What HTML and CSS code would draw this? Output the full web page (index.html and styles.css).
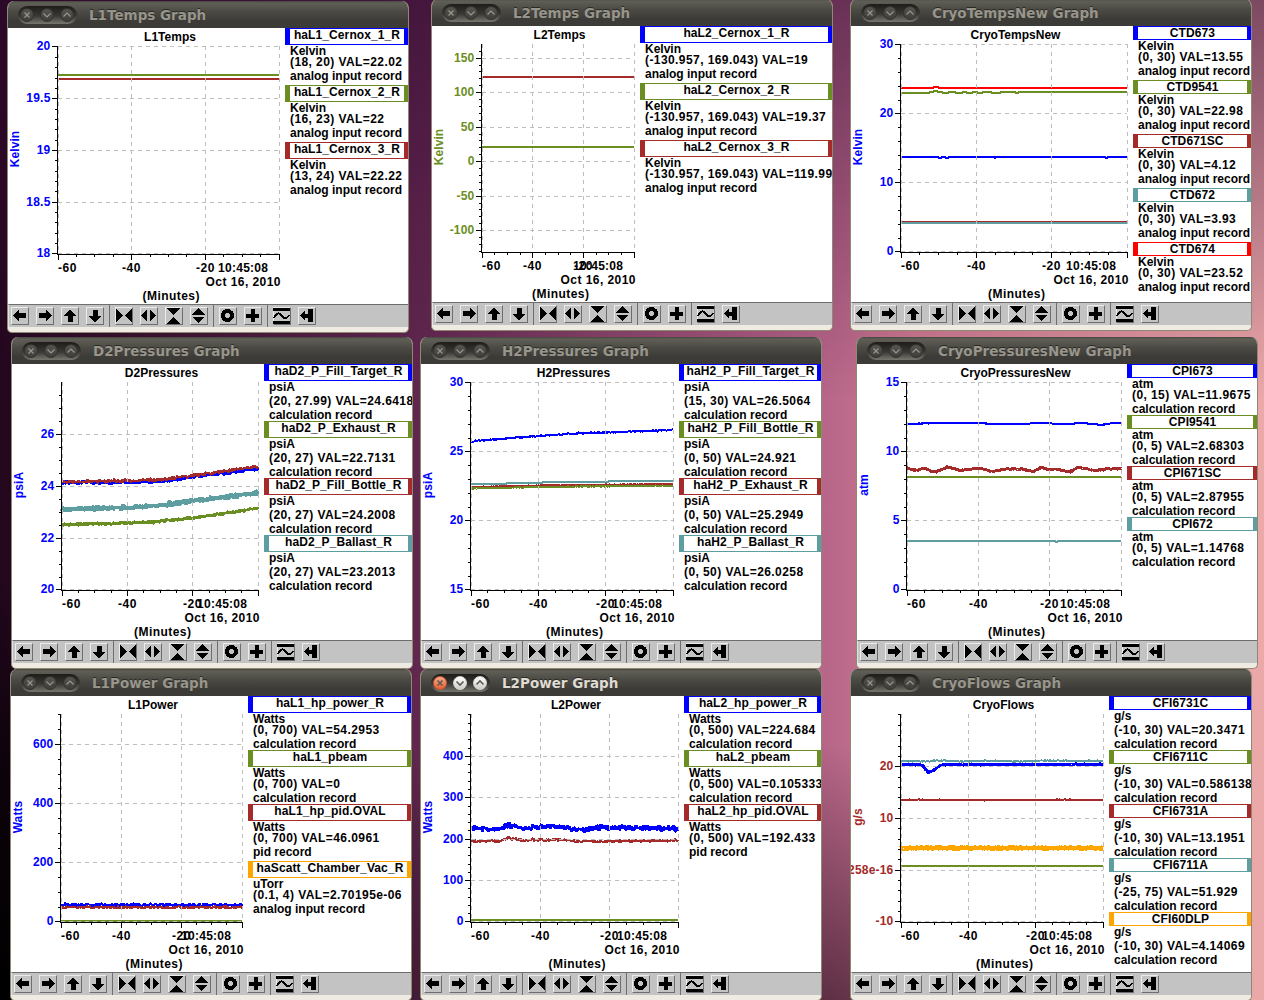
FILE: index.html
```
<!DOCTYPE html>
<html lang="en">
  <head>
    <meta charset="UTF-8" />
    <meta name="viewport" content="width=device-width, initial-scale=1.0" />
    <title>StripTool</title>
    <link rel="stylesheet" href="styles.css">
  </head>
  <body>
    <svg class="defs">
      <symbol id="left" viewBox="0 0 16 16"><path d="M1 7.5 7 1.5V5h7v5H7v3.5z"/></symbol>
      <symbol id="right" viewBox="0 0 16 16"><path d="M15 7.5 9 1.5V5H2v5h7v3.5z"/></symbol>
      <symbol id="up" viewBox="0 0 16 16"><path d="M8 1 14.5 8H10.5v6h-5V8H1.5z"/></symbol>
      <symbol id="down" viewBox="0 0 16 16"><path d="M8 15 14.5 8H10.5V2h-5v6H1.5z"/></symbol>
      <symbol id="xin" viewBox="0 0 16 16"><path d="M0 1v13l7-6.5zM16 1v13L9 7.5z"/></symbol>
      <symbol id="xout" viewBox="0 0 16 16"><path d="M6 1v13L0 7.5zM9 1v13l6-6.5z"/></symbol>
      <symbol id="yin" viewBox="0 0 16 16"><path d="M1 0h13L7.5 7zM1 16h13L7.5 9z"/></symbol>
      <symbol id="yout" viewBox="0 0 16 16"><path d="M1 7h13L7.5 0zM1 9h13l-6.5 6z"/></symbol>
      <symbol id="ring" viewBox="0 0 16 16"><circle cx="7.5" cy="7.5" r="4.5" fill="none" stroke="#000" stroke-width="4"/></symbol>
      <symbol id="plus" viewBox="0 0 16 16"><path d="M5.5 1h4v4.5H14v4H9.5V14h-4V9.5H1v-4h4.5z"/></symbol>
      <symbol id="wave" viewBox="0 0 16 16"><path d="M-1 0h17v3H-1zM-1 13h17v3H-1z"/><path d="M0 10C2 5 5 4 7.5 7.5s5 3.5 8-.5" fill="none" stroke="#000" stroke-width="2"/></symbol>
      <symbol id="back" viewBox="0 0 16 16"><path d="M1 7.5 6 3v3h3V1h5v13H9V9.5H6V12z"/></symbol>
    </svg>
    <div class="desktop"></div>
    <script src="graphs.js"></script>
  </body>
</html>
```
FILE: styles.css
```
* {
  box-sizing: border-box;
}

body {
  margin: 0;
  overflow: hidden;
  font-family: "Liberation Sans", Arial, sans-serif;
  font-size: 12px;
  font-weight: bold;
}

.defs {
  display: none;
}

symbol {
  overflow: visible;
}

.desktop {
  position: relative;
  width: 1264px;
  height: 1000px;
  overflow: hidden;
  background:
    radial-gradient(ellipse 520px 420px at 0 1000px, #000 0, rgba(0, 0, 0, 0.7) 50%, transparent 100%),
    radial-gradient(ellipse 420px 340px at 780px 1080px, rgba(50, 20, 35, 0.9) 0, transparent 100%),
    linear-gradient(rgba(50, 10, 50, 0.6) 0, rgba(60, 10, 55, 0.3) 200px, transparent 400px),
    linear-gradient(to right, #22071d 0, #62294f 34%, #b9688a 66%, #cd7b90 72%, #eba9a9 100%);
}

.window {
  position: absolute;
  width: 402px;
  height: 332px;
  border: 1px solid #8f8872;
  border-top: none;
  border-radius: 7px 7px 5px 5px;
  overflow: hidden;
  background: #efebe3;
}

/* title bar */
.titlebar {
  display: flex;
  align-items: center;
  height: 27px;
  padding: 1px 10px 0;
  background: linear-gradient(#45443e 0, #605f57 2px, #4c4b45 10px, #3c3b37 20px, #3c3b37 100%);
  color: #98958b;
}

.titlebar h1 {
  margin: 0 0 0 12px;
  font: bold 13.5px/20px "DejaVu Sans", sans-serif;
  text-shadow: 0 -1px 0 #2a2926;
}

.controls {
  display: flex;
  align-items: center;
  gap: 6px;
  width: 59px;
  height: 18px;
  padding: 0 2px;
  border-radius: 9px;
  background: linear-gradient(#1e1d1a, #393834 55%, #77766e);
}

.controls svg {
  width: 14px;
  height: 14px;
  flex: none;
  border-radius: 50%;
  background: linear-gradient(#55544e, #3f3e3a);
  border: 1px solid #34332f;
  fill: none;
  stroke: #99968d;
  stroke-width: 1.2;
}

.active .titlebar {
  color: #dfdbd2;
}

.active .controls svg {
  background: linear-gradient(#fff, #cfccc6);
  border-color: #d8d5cf;
  stroke: #5b5a55;
  stroke-width: 1.6;
}

.active .controls svg:first-child {
  background: linear-gradient(#f7a98a, #e8602f);
  border-color: #c9562f;
}

/* plot and legend */
.content {
  display: flex;
  height: 276px;
  overflow: hidden;
  background: #fff;
}

.plot {
  flex: none;
  height: 276px;
  shape-rendering: crispEdges;
}

.plot .axis {
  fill: none;
  stroke: #000;
}

.plot .grid {
  fill: none;
  stroke: #bebebe;
  stroke-dasharray: 4 4;
}

.plot .curve {
  fill: none;
  stroke-width: 2;
}

.legend {
  flex: 1;
  min-width: 0;
  overflow: hidden;
  line-height: 12px;
  white-space: nowrap;
}

.item {
  padding-bottom: 1px;
}

.name {
  height: 14px;
  border: solid;
  border-width: 1px 4px 1px 5px;
  text-align: center;
  line-height: 13px;
  letter-spacing: 0.1px;
}

.name.tall {
  height: 17px;
}

.name span {
  margin: 0 -4px;
  color: #000;
}

.line {
  height: 11px;
  padding-left: 5px;
}

.line.tall {
  height: 14px;
}

.range {
  letter-spacing: 0.42px;
}

/* toolbar */
.toolbar {
  display: flex;
  height: 23px;
  border-top: 1px solid #6e6e6e;
  border-left: 1px solid #e2e2e2;
  background: #c3c3c3;
}

.group {
  display: flex;
  gap: 7px;
  padding: 2px 5px 0;
  border-right: 1px solid #6e6e6e;
}

.group:first-child {
  padding-left: 2px;
}

.group:last-child {
  border-right: none;
}

.toolbar button {
  width: 18px;
  height: 18px;
  padding: 0;
  border: 1px solid;
  border-color: #ececec #6e6e6e #6e6e6e #ececec;
  background: #c3c3c3;
}

.toolbar svg {
  display: block;
  width: 16px;
  height: 16px;
  overflow: visible;
  shape-rendering: crispEdges;
}
```
FILE: graphs.js
```
const BLUE = '#0000ff'
const GREEN = '#6b8e23'
const BROWN = '#a52a2a'
const TEAL = '#5f9ea0'
const RED = '#ff0000'
const ORANGE = '#ffa500'

const ANALOG = 'analog input record'
const CALC = 'calculation record'

// curves: [color, [[x fraction, y], ...], noise, line width]
// legend: [color, name, units, range and value, record type]
const graphs = [
  {
    title: 'L1Temps', x: 7, y: 1, right: 271, unit: 'Kelvin', color: BLUE,
    min: 18, max: 20, minor: 0.1, ticks: [20, 19.5, 19, 18.5, 18],
    curves: [[GREEN, [[0, 47], [1, 47]], 0], [BROWN, [[0, 51], [1, 51]], 0]],
    legend: [
      [BLUE, 'haL1_Cernox_1_R', 'Kelvin', '(18, 20) VAL=22.02', ANALOG],
      [GREEN, 'haL1_Cernox_2_R', 'Kelvin', '(16, 23) VAL=22', ANALOG],
      [BROWN, 'haL1_Cernox_3_R', 'Kelvin', '(13, 24) VAL=22.22', ANALOG]
    ]
  },
  {
    title: 'L2Temps', x: 431, y: -1, right: 202, unit: 'Kelvin', color: GREEN,
    min: -130.957, max: 169.043, minor: 10, ticks: [150, 100, 50, 0, -50, -100],
    curves: [[BROWN, [[0, 51], [1, 51]], 0], [GREEN, [[0, 121], [1, 121]], 0]],
    legend: [
      [BLUE, 'haL2_Cernox_1_R', 'Kelvin', '(-130.957, 169.043) VAL=19', ANALOG],
      [GREEN, 'haL2_Cernox_2_R', 'Kelvin', '(-130.957, 169.043) VAL=19.37', ANALOG],
      [BROWN, 'haL2_Cernox_3_R', 'Kelvin', '(-130.957, 169.043) VAL=119.99', ANALOG]
    ]
  },
  {
    title: 'CryoTempsNew', x: 850, y: -1, right: 276, unit: 'Kelvin', color: BLUE,
    min: 0, max: 30, minor: 2, ticks: [30, 20, 10, 0],
    curves: [
      [BLUE, [[0, 131], [0.16, 131], [0.17, 132], [0.19, 131], [0.2, 132], [0.22, 131], [0.41, 131], [0.415, 132], [0.42, 131], [0.9, 131], [0.91, 132], [0.92, 131], [1, 131]], 0],
      [GREEN, [[0, 67], [0.12, 67], [0.15, 65], [0.17, 66], [0.2, 67], [0.22, 66], [0.26, 67], [0.28, 66], [0.3, 67], [0.33, 66], [0.35, 67], [0.37, 66], [0.43, 67], [0.45, 66], [0.5, 66], [0.51, 67], [0.53, 66], [1, 66]], 0],
      [BROWN, [[0, 196], [1, 196]], 0],
      [TEAL, [[0, 197], [1, 197]], 0],
      [RED, [[0, 62], [0.14, 62], [0.15, 61], [0.16, 61], [0.17, 62], [1, 62]], 0]
    ],
    legend: [
      [BLUE, 'CTD673', 'Kelvin', '(0, 30) VAL=13.55', ANALOG],
      [GREEN, 'CTD9541', 'Kelvin', '(0, 30) VAL=22.98', ANALOG],
      [BROWN, 'CTD671SC', 'Kelvin', '(0, 30) VAL=4.12', ANALOG],
      [TEAL, 'CTD672', 'Kelvin', '(0, 30) VAL=3.93', ANALOG],
      [RED, 'CTD674', 'Kelvin', '(0, 30) VAL=23.52', ANALOG]
    ]
  },
  {
    title: 'D2Pressures', x: 11, y: 337, right: 246, unit: 'psiA', color: BLUE,
    min: 20, max: 27.99, minor: 0.5, ticks: [26, 24, 22, 20],
    curves: [
      [BLUE, [[0, 118.5], [0.4, 118.3], [0.53, 116.5], [0.67, 112.7], [1, 104.5]], 1.8, 3],
      [GREEN, [[0, 160.7], [0.35, 159], [0.5, 157.3], [0.67, 154], [1, 144]], 1.3, 3],
      [BROWN, [[0, 117.7], [0.35, 117], [0.53, 115], [0.67, 111.5], [1, 102.5]], 1.8],
      [TEAL, [[0, 145.3], [0.3, 144], [0.5, 141.3], [0.67, 137], [1, 129]], 2.2, 4]
    ],
    legend: [
      [BLUE, 'haD2_P_Fill_Target_R', 'psiA', '(20, 27.99) VAL=24.6418', CALC],
      [GREEN, 'haD2_P_Exhaust_R', 'psiA', '(20, 27) VAL=22.7131', CALC],
      [BROWN, 'haD2_P_Fill_Bottle_R', 'psiA', '(20, 27) VAL=24.2008', CALC],
      [TEAL, 'haD2_P_Ballast_R', 'psiA', '(20, 27) VAL=23.2013', CALC]
    ]
  },
  {
    title: 'H2Pressures', x: 420, y: 337, right: 252, unit: 'psiA', color: BLUE,
    min: 15, max: 30, minor: 1, ticks: [30, 25, 20, 15],
    curves: [
      [BLUE, [[0, 77.3], [0.33, 72], [0.5, 69.7], [0.67, 68.3], [1, 66]], 0.9],
      [BROWN, [[0, 123], [0.33, 121.6], [1, 120]], 0.4],
      [GREEN, [[0, 124.5], [0.33, 123], [1, 121.6]], 0.4],
      [TEAL, [[0, 120], [0.35, 119], [0.36, 118], [1, 117]], 0]
    ],
    legend: [
      [BLUE, 'haH2_P_Fill_Target_R', 'psiA', '(15, 30) VAL=26.5064', CALC],
      [GREEN, 'haH2_P_Fill_Bottle_R', 'psiA', '(0, 50) VAL=24.921', CALC],
      [BROWN, 'haH2_P_Exhaust_R', 'psiA', '(0, 50) VAL=25.2949', CALC],
      [TEAL, 'haH2_P_Ballast_R', 'psiA', '(0, 50) VAL=26.0258', CALC]
    ]
  },
  {
    title: 'CryoPressuresNew', x: 856, y: 337, right: 264, unit: 'atm', color: BLUE,
    min: 0, max: 15, minor: 1, ticks: [15, 10, 5, 0],
    curves: [
      [BLUE, [[0, 60], [0.15, 59], [0.35, 59.3], [0.43, 60.3], [0.65, 59], [0.72, 60.5], [0.82, 58.8], [0.91, 61], [0.97, 59], [1, 59]], 0.3],
      [GREEN, [[0, 113], [1, 113]], 0.4],
      [BROWN, [[0, 104], [0.04, 106.5], [0.08, 104], [0.13, 108], [0.19, 103], [0.25, 106.5], [0.34, 104], [0.4, 107.5], [0.46, 105], [0.54, 105], [0.59, 107.5], [0.63, 103], [0.66, 106], [0.7, 105], [0.76, 108], [0.8, 103.5], [0.88, 106.5], [0.94, 105], [1, 105]], 0.7, 3],
      [TEAL, [[0, 177], [0.69, 177], [0.7, 178], [0.71, 177], [1, 177]], 0]
    ],
    legend: [
      [BLUE, 'CPI673', 'atm', '(0, 15) VAL=11.9675', CALC],
      [GREEN, 'CPI9541', 'atm', '(0, 5) VAL=2.68303', CALC],
      [BROWN, 'CPI671SC', 'atm', '(0, 5) VAL=2.87955', CALC],
      [TEAL, 'CPI672', 'atm', '(0, 5) VAL=1.14768', CALC]
    ]
  },
  {
    title: 'L1Power', x: 10, y: 669, right: 231, unit: 'Watts', color: BLUE,
    min: 0, max: 700, minor: 50, ticks: [600, 400, 200, 0],
    curves: [
      [BLUE, [[0, 208.8], [1, 209]], 1.6],
      [GREEN, [[0, 225], [1, 225]], 0],
      [BROWN, [[0, 211.3], [1, 211.3]], 1.3]
    ],
    legend: [
      [BLUE, 'haL1_hp_power_R', 'Watts', '(0, 700) VAL=54.2953', CALC],
      [GREEN, 'haL1_pbeam', 'Watts', '(0, 700) VAL=0', CALC],
      [BROWN, 'haL1_hp_pid.OVAL', 'Watts', '(0, 700) VAL=46.0961', 'pid record'],
      [ORANGE, 'haScatt_Chamber_Vac_R', 'uTorr', '(0.1, 4) VAL=2.70195e-06', ANALOG]
    ]
  },
  {
    title: 'L2Power', x: 420, y: 669, right: 257, unit: 'Watts', color: BLUE, active: true,
    min: 0, max: 500, minor: 20, ticks: [400, 300, 200, 100, 0],
    curves: [
      [BLUE, [[0, 132], [0.13, 133], [0.18, 129.5], [0.25, 132], [0.43, 130.5], [0.53, 134], [0.6, 131.5], [1, 132.3]], 2.4, 3],
      [GREEN, [[0, 224], [1, 224]], 0],
      [BROWN, [[0, 145], [0.14, 145], [0.18, 142], [0.25, 144], [0.45, 143.8], [0.5, 145.3], [1, 144.8]], 1.4]
    ],
    legend: [
      [BLUE, 'haL2_hp_power_R', 'Watts', '(0, 500) VAL=224.684', CALC],
      [GREEN, 'haL2_pbeam', 'Watts', '(0, 500) VAL=0.105333', CALC],
      [BROWN, 'haL2_hp_pid.OVAL', 'Watts', '(0, 500) VAL=192.433', 'pid record']
    ]
  },
  {
    title: 'CryoFlows', x: 850, y: 669, right: 252, unit: 'g/s', color: BROWN,
    min: -10, max: 30, minor: 2, ticks: [20, 10, 0, -10],
    labels: { 0: '258e-16' },
    curves: [
      [TEAL, [[0, 65], [0.12, 65.5], [0.18, 64.5], [0.3, 65.5], [0.4, 64.5], [0.6, 65.5], [0.7, 64.5], [1, 65]], 0.6],
      [GREEN, [[0, 170], [1, 170]], 0],
      [BROWN, [[0, 104], [0.12, 103.7], [0.3, 104], [0.7, 104], [0.78, 103.6], [1, 104]], 0.5],
      [ORANGE, [[0, 152], [1, 152]], 0.6, 5],
      [BLUE, [[0, 68.3], [0.105, 69], [0.135, 76.5], [0.155, 75], [0.2, 68.8], [1, 68.3]], 0.5, 3]
    ],
    legend: [
      [BLUE, 'CFI6731C', 'g/s', '(-10, 30) VAL=20.3471', CALC],
      [GREEN, 'CFI6711C', 'g/s', '(-10, 30) VAL=0.586138', CALC],
      [BROWN, 'CFI6731A', 'g/s', '(-10, 30) VAL=13.1951', CALC],
      [TEAL, 'CFI6711A', 'g/s', '(-25, 75) VAL=51.929', CALC],
      [ORANGE, 'CFI60DLP', 'g/s', '(-10, 30) VAL=4.14069', CALC]
    ]
  }
]

const LEFT = 50
const TOP = 18
const BOTTOM = 225

// repeatable noise, so the curves are the same on every load
let seed = 7
function random() {
  seed = (seed * 16807) % 2147483647
  return seed / 2147483647
}

// value on the line through the points at fraction t
function valueAt(points, t) {
  let i = 1
  while (i < points.length - 1 && points[i][0] < t) i++
  const [x0, y0] = points[i - 1]
  const [x1, y1] = points[i]
  return y0 + (y1 - y0) * (t - x0) / (x1 - x0)
}

// noisy signals get several samples per pixel
function curve([color, points, noise, width], right) {
  const line = []
  const step = noise ? 0.5 : 1
  for (let x = LEFT; x <= right; x += step) {
    let y = valueAt(points, (x - LEFT) / (right - LEFT))
    y += noise * (random() + random() - 1) * 1.4
    line.push(x.toFixed(1) + ',' + (noise ? y.toFixed(1) : Math.round(y)))
  }
  return `<polyline class="curve" stroke="${color}" ${width ? `style="stroke-width: ${width}"` : ''} stroke-linejoin="bevel" points="${line.join(' ')}" />`
}

function plot(g) {
  const toY = v => Math.ceil(TOP + (g.max - v) / (g.max - g.min) * (BOTTOM - TOP) - 0.001)
  const toX = n => LEFT + Math.floor((g.right - LEFT) * n / 12)
  const center = (LEFT + g.right) / 2 + 2
  let grid = ''
  let text = ''

  // axis lines
  let axis = `M49.5 ${TOP}V227M${LEFT} 226.5H${g.right + 1}`
  for (let i = 0; i <= 12; i++) {
    const major = i % 4 === 0
    axis += `M${toX(i) + 0.5} 226v${major ? 6 : 3}`
    if (major) grid += `<path class="grid" d="M${toX(i) + 0.5} ${TOP}V226" />`
  }
  const count = Math.floor((g.max - g.min) / g.minor + 0.01)
  const start = Math.ceil(g.min / g.minor - 0.001) * g.minor
  for (let i = 0; i <= count; i++) {
    const v = start + i * g.minor
    if (v <= g.max + 0.001) axis += `M47 ${toY(v) + 0.5}h3`
  }
  g.ticks.forEach(v => {
    const y = toY(v)
    axis += `M44 ${y + 0.5}h6`
    grid += `<path class="grid" d="M${LEFT} ${y + 0.5}H${g.right}" />`
    const label = g.labels && g.labels[v] ? g.labels[v] : v
    text += `<text x="42.5" y="${y + 4}" text-anchor="end" fill="${g.color}" letter-spacing=".2">${label}</text>`
  })

  text += `
    <text x="${center - 0.5}" y="13" text-anchor="middle">${g.title}</text>
    <text x="50" y="244" letter-spacing=".5">-60</text>
    <text x="${toX(4) + 0.5}" y="244" text-anchor="middle" letter-spacing=".5">-40</text>
    <text x="${toX(8) + 0.5}" y="244" text-anchor="middle" letter-spacing=".5">-20</text>
    <text x="${g.right - 61}" y="244" textLength="50">10:45:08</text>
    <text x="${g.right - 73.5}" y="258" textLength="75">Oct 16, 2010</text>
    <text x="${center - 28}" y="272" textLength="57">(Minutes)</text>
    <text transform="translate(11 121) rotate(-90)" text-anchor="middle" fill="${g.color}" letter-spacing=".1">${g.unit}</text>`

  return `<svg class="plot" width="${g.right + 6}">
    ${g.curves.map(c => curve(c, g.right)).join('')}
    ${grid}<path class="axis" d="${axis}" />${text}
  </svg>`
}

// a line with descenders takes 3px more
const tall = s => /[gjpqy_(]/.test(s) ? ' tall' : ''

function legend([color, name, unit, range, type]) {
  return `<div class="item">
    <div class="name${tall(name)}" style="border-color: ${color}"><span>${name}</span></div>
    <div class="line${tall(unit)}">${unit}</div>
    <div class="line range tall">${range}</div>
    <div class="line${tall(type)}">${type}</div>
  </div>`
}

const tools = [
  ['left', 'right', 'up', 'down'],
  ['xin', 'xout', 'yin', 'yout'],
  ['ring', 'plus'],
  ['wave', 'back']
]

const toolbar = tools.map(group => `<div class="group">${
  group.map(id => `<button><svg><use href="#${id}" /></svg></button>`).join('')
}</div>`).join('')

document.querySelector('.desktop').innerHTML = graphs.map(g => `
  <div class="window${g.active ? ' active' : ''}" style="left: ${g.x}px; top: ${g.y}px">
    <div class="titlebar">
      <div class="controls">
        <svg viewBox="0 0 12 12"><path d="M3.5 3.5l5 5M8.5 3.5l-5 5" /></svg>
        <svg viewBox="0 0 12 12"><path d="M2.5 4.5L6 8l3.5-3.5" /></svg>
        <svg viewBox="0 0 12 12"><path d="M2.5 7.5L6 4l3.5 3.5" /></svg>
      </div>
      <h1>${g.title} Graph</h1>
    </div>
    <div class="content">
      ${plot(g)}
      <div class="legend">${g.legend.map(legend).join('')}</div>
    </div>
    <div class="toolbar">${toolbar}</div>
  </div>`).join('')
```
